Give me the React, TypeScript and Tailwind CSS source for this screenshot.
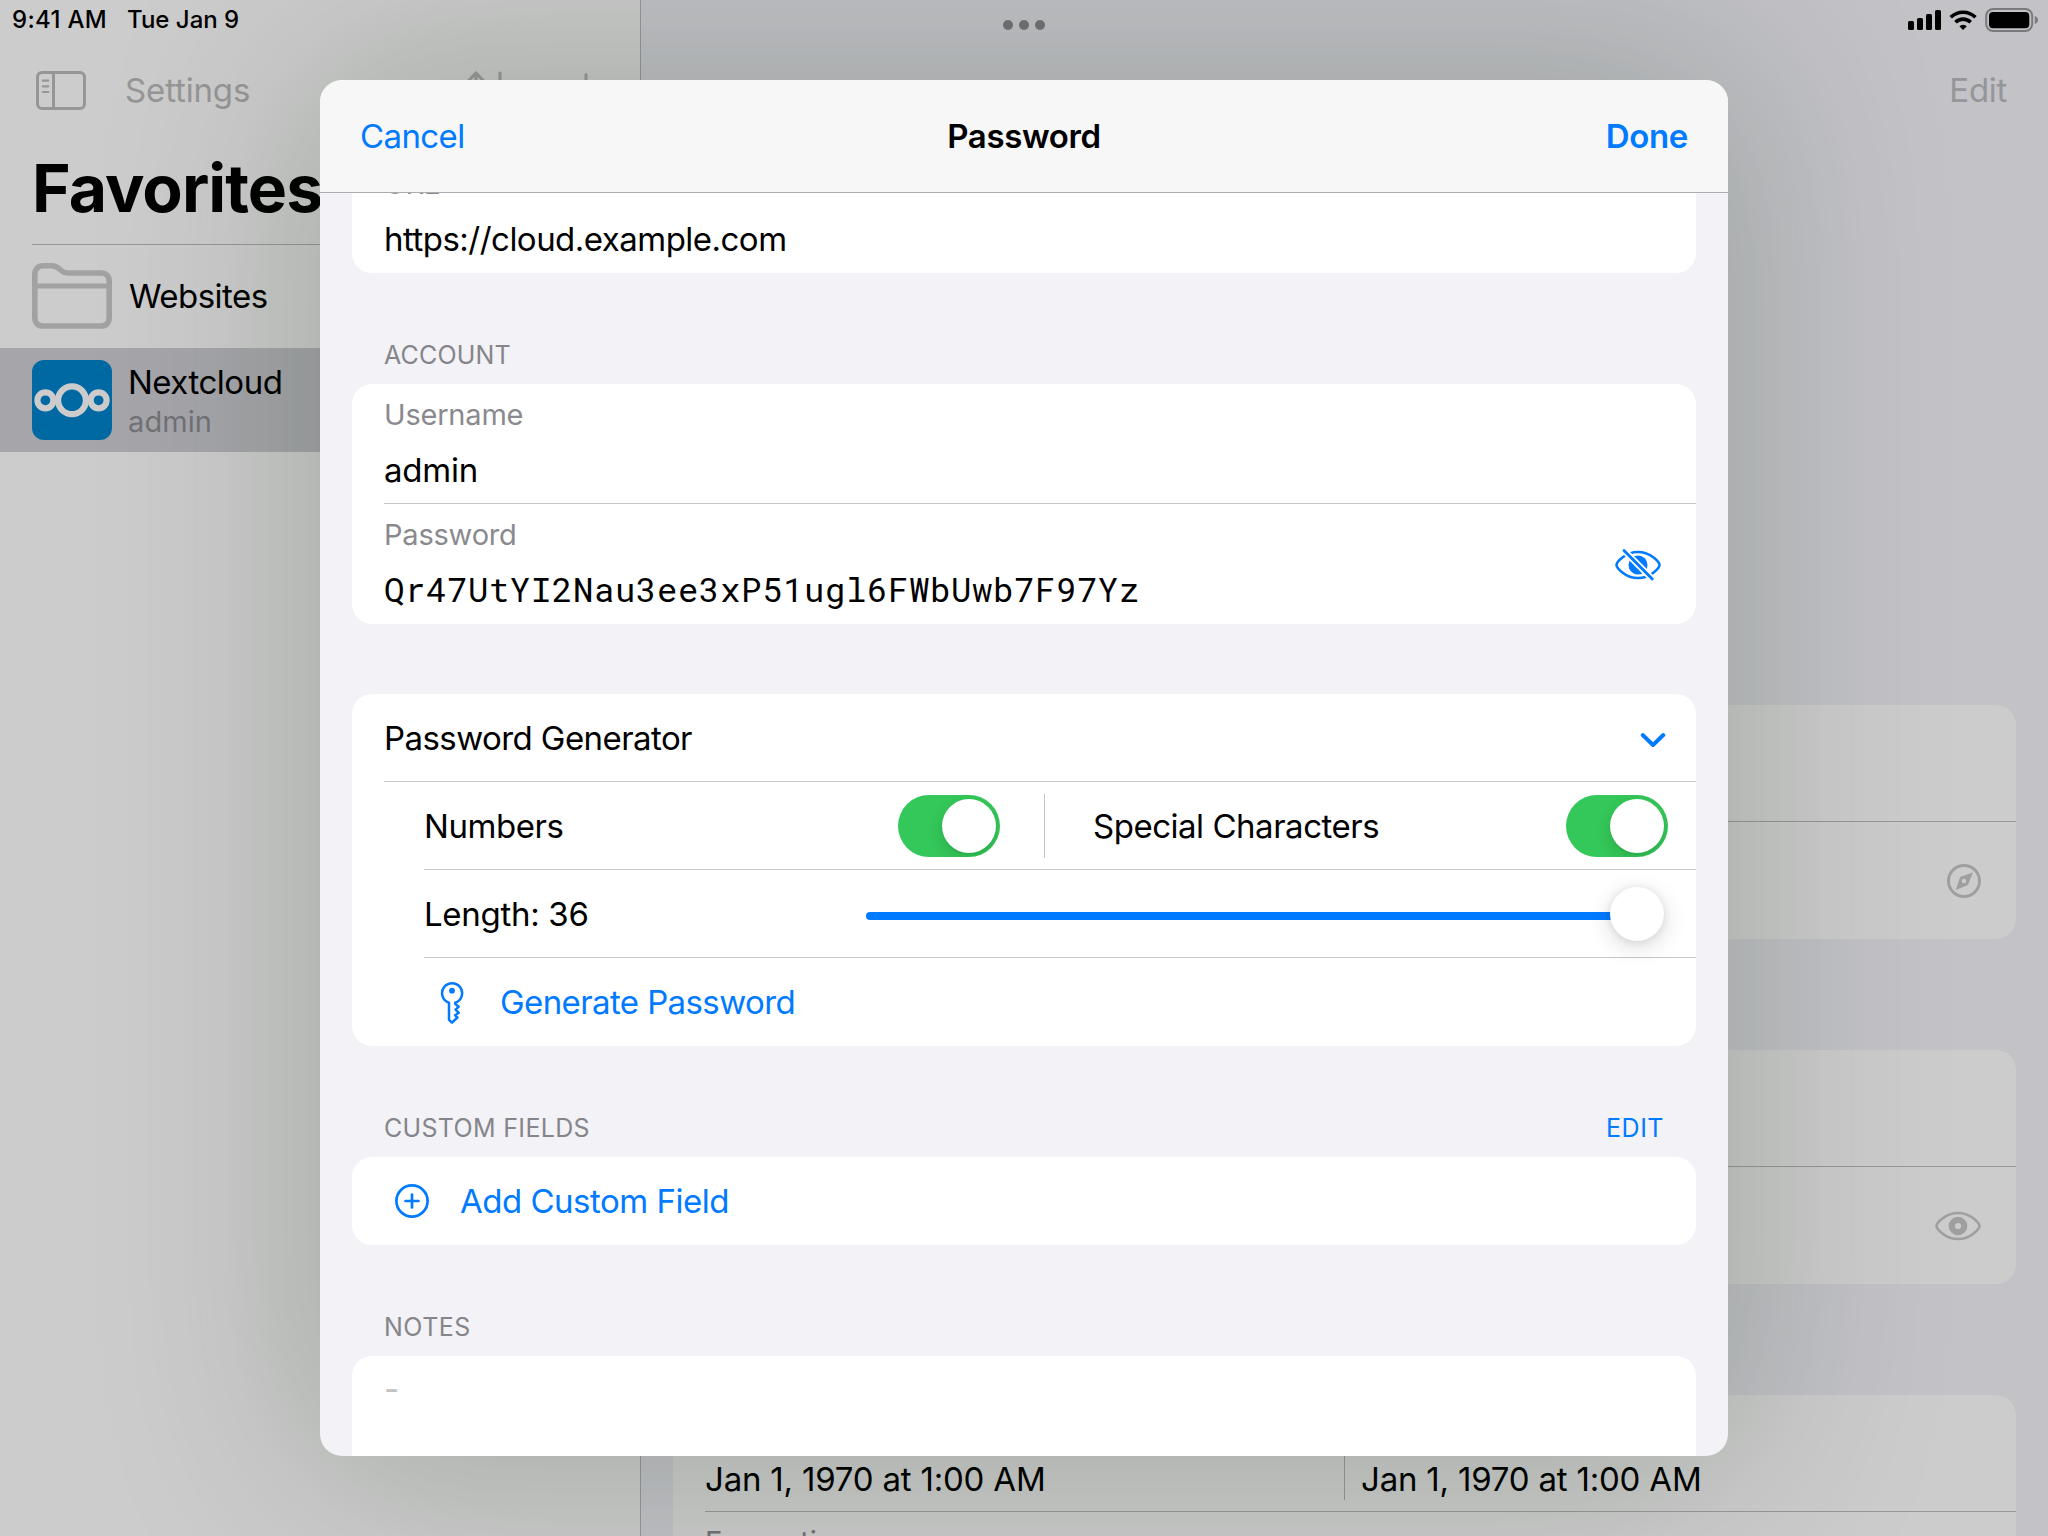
import type { ReactNode } from "react";

function SidebarIcon() {
  return (
    <svg width="50" height="39" viewBox="0 0 50 39" fill="none" stroke="#969696" strokeWidth="3">
      <rect x="1.5" y="1.5" width="47" height="36" rx="4.5" />
      <path d="M17.5 1.5v36" />
      <path d="M6.8 9.7h5.4M6.8 15.3h5.4M6.8 21h5.4" strokeWidth="2.2" strokeLinecap="round" />
    </svg>
  );
}

function SortIcon() {
  return (
    <svg width="46" height="38" viewBox="0 0 46 38" fill="none" stroke="#9b9c9a" strokeWidth="3.2" strokeLinecap="round" strokeLinejoin="round">
      <path d="M11 2v33M2 11.5L11 2l9 9.5" />
      <path d="M35 2v33M26 26.500l9 9.500 9-9.500" />
    </svg>
  );
}

function PlusIcon() {
  return (
    <svg width="36" height="36" viewBox="0 0 36 36" fill="none" stroke="#9b9c9a" strokeWidth="3.2" strokeLinecap="round">
      <path d="M18 2.500v31M2.500 18h31" />
    </svg>
  );
}

function FolderIcon() {
  return (
    <svg width="80" height="66" viewBox="0 0 80 66" fill="none" stroke="#a2a2a2" strokeWidth="5.6" strokeLinejoin="round">
      <path d="M2.800 54.500V11.500C2.800 6 6 2.800 11 2.800h8.500c3.500 0 5.500 1 8 3.200l2.500 2.200c1.700 1.400 3 1.800 5 1.800h34c5.200 0 8.200 3 8.200 8.200v36.300c0 5.200-3 8.500-8.200 8.500H11c-5.200 0-8.200-3.300-8.200-8.500z" />
      <path d="M4 23h72" strokeWidth="5" />
    </svg>
  );
}

function NextcloudLogo() {
  return (
    <div className="size-20 rounded-xl bg-[#0069a3]">
      <svg width="80" height="80" viewBox="0 0 80 80" fill="none" stroke="#cccccc" strokeWidth="6.200">
        <circle cx="13.400" cy="40.300" r="8" />
        <circle cx="40" cy="40.300" r="13.900" />
        <circle cx="66.600" cy="40.300" r="8" />
      </svg>
    </div>
  );
}

function CompassIcon() {
  return (
    <svg width="36" height="36" viewBox="-18 -18 36 36">
      <circle r="15.500" fill="none" stroke="#9f9f9f" strokeWidth="3" />
      <path
        fillRule="evenodd"
        fill="#9f9f9f"
        d="M8.900-8.600L4.200 3.200Q4 3.900 3.300 4.200L-8.300 8.900L-4.200-3.200Q-3.900-3.900-3.200-4.200zM0-2.200a2.200 2.200 0 1 0 0 4.400a2.200 2.200 0 1 0 0-4.400z"
      />
    </svg>
  );
}

const LENS = "M-21.500 0C-21.500-2.400-13-13 0-13S21.500-2.400 21.500 0S13 13 0 13S-21.500 2.400-21.500 0z";

function EyeIcon() {
  return (
    <svg width="46" height="30" viewBox="-23 -15 46 30" fill="none" stroke="#9f9f9f">
      <path d={LENS} strokeWidth="2.600" />
      <circle r="6.200" strokeWidth="6.200" />
    </svg>
  );
}

function EyeSlashIcon() {
  return (
    <svg width="46" height="34" viewBox="-23 -17 46 34" fill="none" stroke="#007aff" strokeLinecap="round">
      <path d={LENS} strokeWidth="2.600" />
      <circle r="9.500" fill="#007aff" stroke="none" />
      <path d="M-14-14.500L14.300 14" stroke="#ffffff" strokeWidth="6.500" strokeLinecap="butt" />
      <path d="M-14-14.500L14.300 14" strokeWidth="2.800" />
    </svg>
  );
}

function KeyIcon() {
  return (
    <svg width="24" height="44" viewBox="440 980 24 44" fill="none" stroke="#007aff" strokeWidth="2.500" strokeLinejoin="round">
      <path d="M449 1001.700A10 10 0 1 1 455.200 1001.700V1002.800L458.600 1005.800L455.600 1008.600L458.800 1011.800L455 1014.200L457.400 1016.500L452 1021.700L449 1018.800z" />
      <circle cx="452" cy="989.700" r="2.900" fill="#007aff" stroke="none" />
    </svg>
  );
}

function PlusCircleIcon() {
  return (
    <svg width="34" height="34" viewBox="-17 -17 34 34" fill="none" stroke="#007aff" strokeWidth="2.700" strokeLinecap="round">
      <circle r="15.600" />
      <path d="M0-6.500v13M-6.500 0h13" />
    </svg>
  );
}

function ChevronDown() {
  return (
    <svg width="26" height="16" viewBox="0 0 26 16" fill="none" stroke="#007aff" strokeWidth="3.900" strokeLinecap="round" strokeLinejoin="round">
      <path d="M2.700 3L13 13L23.300 3" />
    </svg>
  );
}

function StatusIcons() {
  return (
    <svg width="132" height="24" viewBox="1908 8 132 24">
      <rect x="1908" y="21" width="6" height="9" rx="1.500" />
      <rect x="1917" y="18" width="6" height="12" rx="1.500" />
      <rect x="1926" y="14" width="6" height="16" rx="1.500" />
      <rect x="1935" y="10" width="6" height="20" rx="1.500" />
      <g fill="none" stroke="#000000" strokeWidth="3.600">
        <path d="M1950.700 17.300A17.700 17.700 0 0 1 1975.500 17.300" />
        <path d="M1955.500 22.200A11 11 0 0 1 1970.700 22.200" />
      </g>
      <path d="M1963.100 30L1959.400 26.300A5.300 5.300 0 0 1 1966.800 26.300z" />
      <rect x="1986.200" y="9" width="46" height="22" rx="7" fill="none" stroke="#7a7a7d" strokeWidth="2" />
      <rect x="1989" y="12" width="40.300" height="16.200" rx="4" />
      <path d="M2034.800 16v8c2.100-.7 3.200-2.300 3.200-4s-1.100-3.300-3.200-4z" fill="#7a7a7d" />
    </svg>
  );
}

function StatusBar() {
  return (
    <div className="absolute inset-x-0 top-0 flex h-10 items-start">
      <div className="flex w-[640px] pl-3 text-[24px] font-medium leading-[40px]">
        <span className="w-[115px] tracking-[0.3px]">9:41 AM</span>
        <span>Tue Jan 9</span>
      </div>
      <div className="flex flex-1 gap-1.5 pl-[363px] pt-5">
        <i className="size-2.5 rounded-full bg-[#737476]" />
        <i className="size-2.5 rounded-full bg-[#737476]" />
        <i className="size-2.5 rounded-full bg-[#737476]" />
      </div>
      <div className="pr-2 pt-2">
        <StatusIcons />
      </div>
    </div>
  );
}

function Sidebar() {
  return (
    <aside className="flex w-[641px] flex-col border-r border-[#98989a] bg-[#cccccc]">
      <nav className="mt-10 flex h-[100px] shrink-0 items-center pl-9 pr-9 text-[33px] text-[#969696]">
        <SidebarIcon />
        <span className="ml-[39px] pt-0.5 tracking-[-0.14px]">Settings</span>
        <span className="ml-auto mr-[57px]">
          <SortIcon />
        </span>
        <PlusIcon />
      </nav>
      <h1 className="ml-8 h-[105px] border-b border-[#98989a] text-[66px] font-bold leading-[96px] tracking-[-0.95px]">Favorites</h1>
      <div className="flex h-[103px] items-center gap-[17px] pb-0.5 pl-8">
        <FolderIcon />
        <span className="pt-0.5 text-[33px] tracking-[-0.53px]">Websites</span>
      </div>
      <div className="flex h-[104px] items-center gap-4 bg-[#a6a6aa] pl-8">
        <NextcloudLogo />
        <div className="flex flex-col pt-0.5">
          <span className="text-[33px] leading-[41px] tracking-[-0.5px]">Nextcloud</span>
          <span className="text-[29px] leading-[38px] tracking-[0.1px] text-[#727276]">admin</span>
        </div>
      </div>
    </aside>
  );
}

function DetailCard({ icon }: { icon: ReactNode }) {
  return (
    <div className="mb-[111px] h-[234px] shrink-0 rounded-[20px] bg-[#cccccc]">
      <div className="ml-8 h-[117px] border-b border-[#98989a]" />
      <div className="flex h-[117px] items-center justify-end pr-[35px]">{icon}</div>
    </div>
  );
}

function Detail() {
  return (
    <main className="flex flex-1 flex-col bg-[#c2c2c7] px-8">
      <div className="mt-10 flex h-[665px] shrink-0 justify-end pr-[9px] text-[33px] leading-[101px] tracking-[-0.3px] text-[#969698]">Edit</div>
      <DetailCard
        icon={
          <span className="-mr-px">
            <CompassIcon />
          </span>
        }
      />
      <DetailCard icon={<EyeIcon />} />
      <div className="h-[200px] shrink-0 rounded-t-[20px] bg-[#cccccc] pl-8">
        <div className="flex h-[117px] items-end border-b border-[#98989a] pb-[11px] text-[33px] leading-[42px] tracking-[-0.2px]">
          <div className="h-[90px] w-[640px] border-r border-[#98989a] pt-[48px]">Jan 1, 1970 at 1:00 AM</div>
          <div className="h-[90px] pl-4 pt-[48px]">Jan 1, 1970 at 1:00 AM</div>
        </div>
        <div className="pt-[10px] text-[29px] leading-[40px] tracking-[-0.2px] text-[#727276]">Encryption</div>
      </div>
    </main>
  );
}

function Card({ children }: { children: ReactNode }) {
  return <section className="overflow-hidden rounded-[20px] bg-white">{children}</section>;
}

function SectionHeader({ title, tracking, action }: { title: string; tracking: string; action?: string }) {
  return (
    <div className="mb-3 mt-[65px] flex h-[34px] justify-between pl-8 pr-8 text-[25px] leading-[34px] text-[#85858a]">
      <span className={tracking}>{title}</span>
      {action && <span className="tracking-[0.5px] text-[#007aff]">{action}</span>}
    </div>
  );
}

function Field({ label, divider, icon, children }: { label: string; divider?: boolean; icon?: ReactNode; children: ReactNode }) {
  return (
    <div className={divider ? "ml-8 flex h-[120px] border-b border-[#c6c6c8]" : "ml-8 flex h-[120px]"}>
      <div className="flex-1 pt-2.5">
        <div className="text-[29px] leading-[41px] tracking-[-0.2px] text-[#8a8a8e]">{label}</div>
        <div className="mt-2.5 text-[33px] leading-[50px] tracking-[-0.2px]">{children}</div>
      </div>
      {icon && <div className="flex items-center pr-[35px] pt-0.5">{icon}</div>}
    </div>
  );
}

function Toggle() {
  return (
    <div className="flex h-[62px] w-[102px] items-center justify-end overflow-hidden rounded-full bg-[#34c759] pr-1">
      <div className="size-[54px] rounded-full bg-white shadow-[0_6px_16px_rgba(0,0,0,0.12),0_2px_2px_rgba(0,0,0,0.05)]" />
    </div>
  );
}

function Generator() {
  return (
    <div className="mt-[70px] text-[33px]">
      <Card>
        <div className="ml-8 flex h-[88px] items-center justify-between border-b border-[#c6c6c8] pr-[30px]">
          <span className="pt-0.5 tracking-[-0.57px]">Password Generator</span>
          <span className="pt-1">
            <ChevronDown />
          </span>
        </div>
        <div className="ml-[72px] flex h-[88px] items-center border-b border-[#c6c6c8] pr-7">
          <div className="flex w-[576px] items-center justify-between tracking-[-0.43px]">
            <span className="pt-0.5">Numbers</span>
            <Toggle />
          </div>
          <div className="ml-11 h-16 w-px bg-[#c6c6c8]" />
          <div className="ml-12 flex flex-1 items-center justify-between tracking-[-0.48px]">
            <span className="pt-0.5">Special Characters</span>
            <Toggle />
          </div>
        </div>
        <div className="ml-[72px] flex h-[88px] items-center border-b border-[#c6c6c8] pr-8">
          <span className="w-[442px] pt-0.5 tracking-[-0.3px]">Length: 36</span>
          <div className="flex flex-1 items-center">
            <div className="mt-1 h-2 flex-1 rounded-l-full bg-[#007aff]" />
            <div className="-ml-[2px] size-[54px] rounded-full bg-white shadow-[0_6px_24px_rgba(0,0,0,0.14),0_1px_8px_rgba(0,0,0,0.1)]" />
          </div>
        </div>
        <div className="flex h-[88px] items-center pl-[88px] pt-0.5 text-[#007aff]">
          <KeyIcon />
          <span className="ml-9 tracking-[-0.6px]">Generate Password</span>
        </div>
      </Card>
    </div>
  );
}

function Sheet() {
  return (
    <div className="absolute left-80 top-20 flex h-[1376px] w-[1408px] flex-col rounded-[22px] bg-[#f2f2f7] shadow-[0_0_210px_12px_rgba(10,32,4,0.21)]">
      <header className="grid h-[113px] grid-cols-3 items-center rounded-t-[22px] border-b border-[#adadaf] bg-[#f7f7f8] px-10 pt-0.5 text-[33px] text-[#007aff]">
        <span className="tracking-[-0.6px]">Cancel</span>
        <span className="text-center font-semibold tracking-[-0.37px] text-black">Password</span>
        <span className="text-right font-semibold tracking-[-0.33px]">Done</span>
      </header>
      <div className="flex-1 overflow-hidden rounded-b-[22px] px-8">
        <div className="-mt-10">
          <Card>
            <Field label="URL">
              <span className="tracking-[-0.52px]">https://cloud.example.com</span>
            </Field>
          </Card>
          <SectionHeader title="ACCOUNT" tracking="tracking-[0.18px]" />
          <Card>
            <Field label="Username" divider>
              admin
            </Field>
            <Field label="Password" icon={<EyeSlashIcon />}>
              <span className="block font-['Roboto_Mono','Liberation_Mono',monospace] text-[34px] leading-[48px] tracking-[0.6px]">Qr47UtYI2Nau3ee3xP51ugl6FWbUwb7F97Yz</span>
            </Field>
          </Card>
          <Generator />
          <SectionHeader title="CUSTOM FIELDS" tracking="tracking-[0.32px]" action="EDIT" />
          <Card>
            <div className="flex h-[88px] items-center pl-[43px] text-[33px] text-[#007aff]">
              <PlusCircleIcon />
              <span className="ml-[31px] pt-0.5 tracking-[-0.5px]">Add Custom Field</span>
            </div>
          </Card>
          <SectionHeader title="NOTES" tracking="tracking-[0.5px]" />
          <Card>
            <div className="h-[160px] pl-8 pt-3 text-[33px] leading-[42px] text-[#c2c2c5]">-</div>
          </Card>
        </div>
      </div>
    </div>
  );
}

export default function App() {
  return (
    <div className="relative flex h-[1536px] w-[2048px] overflow-hidden font-['Inter',sans-serif] text-black">
      <Sidebar />
      <Detail />
      <StatusBar />
      <Sheet />
    </div>
  );
}
